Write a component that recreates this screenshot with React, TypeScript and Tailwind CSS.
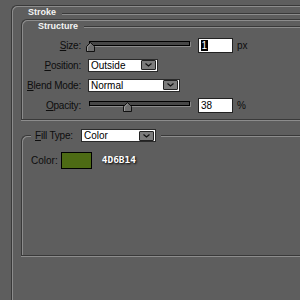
const groove =
  "border-[#393939] shadow-[inset_1px_1px_0_#8c8c8c,0_1px_0_#8c8c8c]";

function Chevron() {
  return (
    <svg width="7" height="4" viewBox="0 0 7 4">
      <polyline points="0.5,0.5 3.5,3 6.5,0.5" fill="none" stroke="#111" strokeWidth="1.2" />
    </svg>
  );
}

function Select({ value, className }: { value: string; className: string }) {
  return (
    <div
      className={`flex items-center justify-between h-[13px] bg-white border border-[#2a2a2a] pl-[2px] pr-[1px] ${className}`}
    >
      <span className="leading-[11px] text-black">{value}</span>
      <div className="flex items-center justify-center w-[15px] h-[10px] bg-[#7c7c7c] border border-[#222] rounded-[1px]">
        <Chevron />
      </div>
    </div>
  );
}

function Slider({ value }: { value: number }) {
  // thumb position taken from the value (0..100)
  const left = -2 + value * 0.974;
  return (
    <div className="relative w-[102px] h-[16px]">
      <div className="absolute left-[1px] right-0 top-[4px] h-[5px] border border-black bg-[#474747] shadow-[1px_1px_0_#8a8a8a]" />
      <svg className="absolute top-[5px]" style={{ left }} width="10" height="11" viewBox="0 0 10 11">
        <polygon points="4.5,0.5 8.5,4.5 8.5,9.5 0.5,9.5 0.5,4.5" fill="#6e6e6e" stroke="#111" />
        <polyline points="1.5,9 1.5,5 4.5,2" fill="none" stroke="#9a9a9a" />
      </svg>
    </div>
  );
}

function Label({ mn, rest }: { mn: string; rest: string }) {
  return (
    <div className="w-[59px] text-right whitespace-nowrap tracking-[-0.2px] text-[#0d0d0d]">
      <u className="underline-offset-[1px]">{mn}</u>
      {rest}
    </div>
  );
}

export default function App() {
  return (
    <div className="w-[300px] h-[300px] overflow-hidden bg-[#5e5e5e] pt-[5px] pl-[11px] font-['Liberation_Sans',Arial,sans-serif] text-[10px]">
      {/* Stroke group */}
      <div className={`h-[400px] rounded-tl-[6px] border-l border-t ${groove}`}>
        <div className="flex h-[13px]">
          <span className="pl-[16px] leading-[13px] text-[9px] font-bold text-[#f4f4f4]">Stroke</span>
          <div className="flex-1 ml-[6px] mt-[7px] h-[2px] border-t border-[#393939] bg-[#8c8c8c]" />
        </div>

        {/* Structure */}
        <div className={`ml-[9px] pb-[4px] rounded-tl-[6px] border-l border-t border-b ${groove}`}>
          <div className="flex h-[13px]">
            <span className="pl-[16px] leading-[13px] text-[9px] font-bold text-[#f4f4f4]">Structure</span>
            <div className="flex-1 ml-[6px] mt-[6px] h-[2px] border-t border-[#393939] bg-[#8c8c8c]" />
          </div>

          <div className="pt-[2px]">
            <div className="flex items-center h-[20px]">
              <Label mn="S" rest="ize:" />
              <div className="ml-[7px]">
                <Slider value={0} />
              </div>
              <div className="ml-[8px] flex items-center w-[35px] h-[15px] bg-white border border-[#222] pl-[2px]">
                <span className="bg-black text-white leading-[11px] px-[0.5px]">1</span>
              </div>
              <span className="ml-[4px] text-[#0d0d0d]">px</span>
            </div>
            <div className="flex items-center h-[20px]">
              <Label mn="P" rest="osition:" />
              <Select value="Outside" className="ml-[7px] w-[70px]" />
            </div>
            <div className="flex items-center h-[20px]">
              <Label mn="B" rest="lend Mode:" />
              <Select value="Normal" className="ml-[7px] w-[92px]" />
            </div>
            <div className="flex items-center h-[20px]">
              <Label mn="O" rest="pacity:" />
              <div className="ml-[7px]">
                <Slider value={38} />
              </div>
              <div className="ml-[8px] flex items-center w-[35px] h-[15px] bg-white border border-[#222] pl-[2px]">
                <span className="leading-[11px] text-black">38</span>
              </div>
              <span className="ml-[4px] text-[#0d0d0d]">%</span>
            </div>
          </div>
        </div>

        {/* Fill Type */}
        <div className={`mt-[15px] ml-[9px] h-[121px] rounded-tl-[6px] border-l border-t border-b ${groove}`}>
          <div className="-mt-[7px] ml-[9px] flex items-center h-[13px] w-fit pl-[4px] pr-[5px] bg-[#5e5e5e]">
            <div className="w-[39px] whitespace-nowrap tracking-[-0.2px] text-[#0d0d0d]">
              <u className="underline-offset-[1px]">F</u>ill Type:
            </div>
            <Select value="Color" className="ml-[7px] w-[75px]" />
          </div>

          <div className="mt-[10px] ml-[9px] flex items-center h-[17px]">
            <span className="text-[#0d0d0d]">Color:</span>
            <div className="ml-[3px] w-[31px] h-[17px] bg-[#4d6b14] border border-black" />
            <span className="ml-[10px] font-['DejaVu_Sans_Mono',monospace] font-bold text-[9.5px] text-white [text-shadow:1px_1px_2px_#000]">
              4D6B14
            </span>
          </div>
        </div>
      </div>
    </div>
  );
}
